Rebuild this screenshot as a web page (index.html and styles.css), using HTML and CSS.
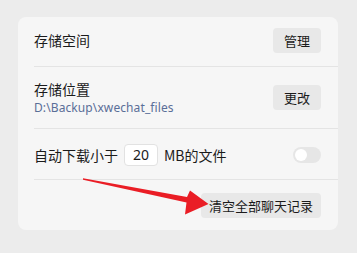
FILE: index.html
```html
<!DOCTYPE html>
<html lang="zh">
<head>
<meta charset="utf-8">
<link rel="stylesheet" href="styles.css">
</head>
<body>
<div class="card">
  <div class="row row-1">
    <div class="label">存储空间</div>
    <button class="btn">管理</button>
  </div>
  <div class="row row-2">
    <div class="stack">
      <div class="label">存储位置</div>
      <div class="path">D:\Backup\xwechat_files</div>
    </div>
    <button class="btn">更改</button>
  </div>
  <div class="row row-3">
    <div class="inline">
      <span class="label">自动下载小于</span>
      <span class="num">20</span>
      <span class="label">MB的文件</span>
    </div>
    <div class="toggle"><div class="knob"></div></div>
  </div>
  <div class="row row-4 last">
    <button class="btn btn-wide">清空全部聊天记录</button>
  </div>
</div>
<svg class="arrow" width="357" height="253" viewBox="0 0 357 253">
  <polygon points="83,178.3 187,197 190,190.5 208.5,204 185,214.5 186.5,202.5 83,179.8" fill="#ea1d25"/>
</svg>
</body>
</html>
```
FILE: styles.css
```css
html, body {
  margin: 0;
  padding: 0;
}
body {
  width: 357px;
  height: 253px;
  background: #ececec;
  font-family: "Noto Sans CJK SC", "Noto Sans", sans-serif;
  color: #1b1b1b;
  position: relative;
  overflow: hidden;
  padding-top: 17px;
  padding-left: 18px;
  box-sizing: border-box;
}
.card {
  width: 320px;
  height: 213px;
  background: #f6f6f6;
  border-radius: 8px;
  display: flex;
  flex-direction: column;
}
.row {
  margin-left: 16px;
  padding-right: 17px;
  display: flex;
  align-items: center;
  justify-content: space-between;
  border-bottom: 1px solid #e4e4e4;
  box-sizing: border-box;
}
.row-1 { height: 50px; padding-bottom: 3px; }
.row-2 { height: 62px; }
.row-3 { height: 51px; padding-top: 2px; }
.row-4 { height: 50px; justify-content: flex-end; border-bottom: none; }
.label {
  font-size: 14px;
  line-height: 20px;
}
.stack {
  display: flex;
  flex-direction: column;
}
.path {
  font-family: "Noto Sans", "Open Sans", sans-serif;
  font-size: 12px;
  letter-spacing: 0.1px;
  line-height: 16px;
  color: #5a6e98;
  margin-top: 1px;
}
.btn {
  font-family: "Noto Sans CJK SC", sans-serif;
  font-size: 13px;
  color: #1b1b1b;
  background: #e8e8e8;
  border: none;
  border-radius: 4px;
  height: 25px;
  width: 48px;
  padding: 0;
  line-height: 25px;
}
.btn-wide { width: 120px; }
.inline {
  display: flex;
  align-items: center;
  gap: 6px;
}
.num {
  width: 34px;
  height: 22px;
  box-sizing: border-box;
  background: #ffffff;
  border: 1px solid #e2e2e2;
  border-radius: 4px;
  font-size: 14px;
  line-height: 20px;
  text-align: center;
  font-family: "Noto Sans", sans-serif;
}
.toggle {
  width: 28px;
  height: 16px;
  border-radius: 8px;
  background: #e6e6e6;
  display: flex;
  align-items: center;
  padding-left: 2px;
  box-sizing: border-box;
}
.knob {
  width: 12px;
  height: 12px;
  border-radius: 50%;
  background: #ffffff;
}
.arrow {
  position: absolute;
  left: 0;
  top: 0;
}
```
